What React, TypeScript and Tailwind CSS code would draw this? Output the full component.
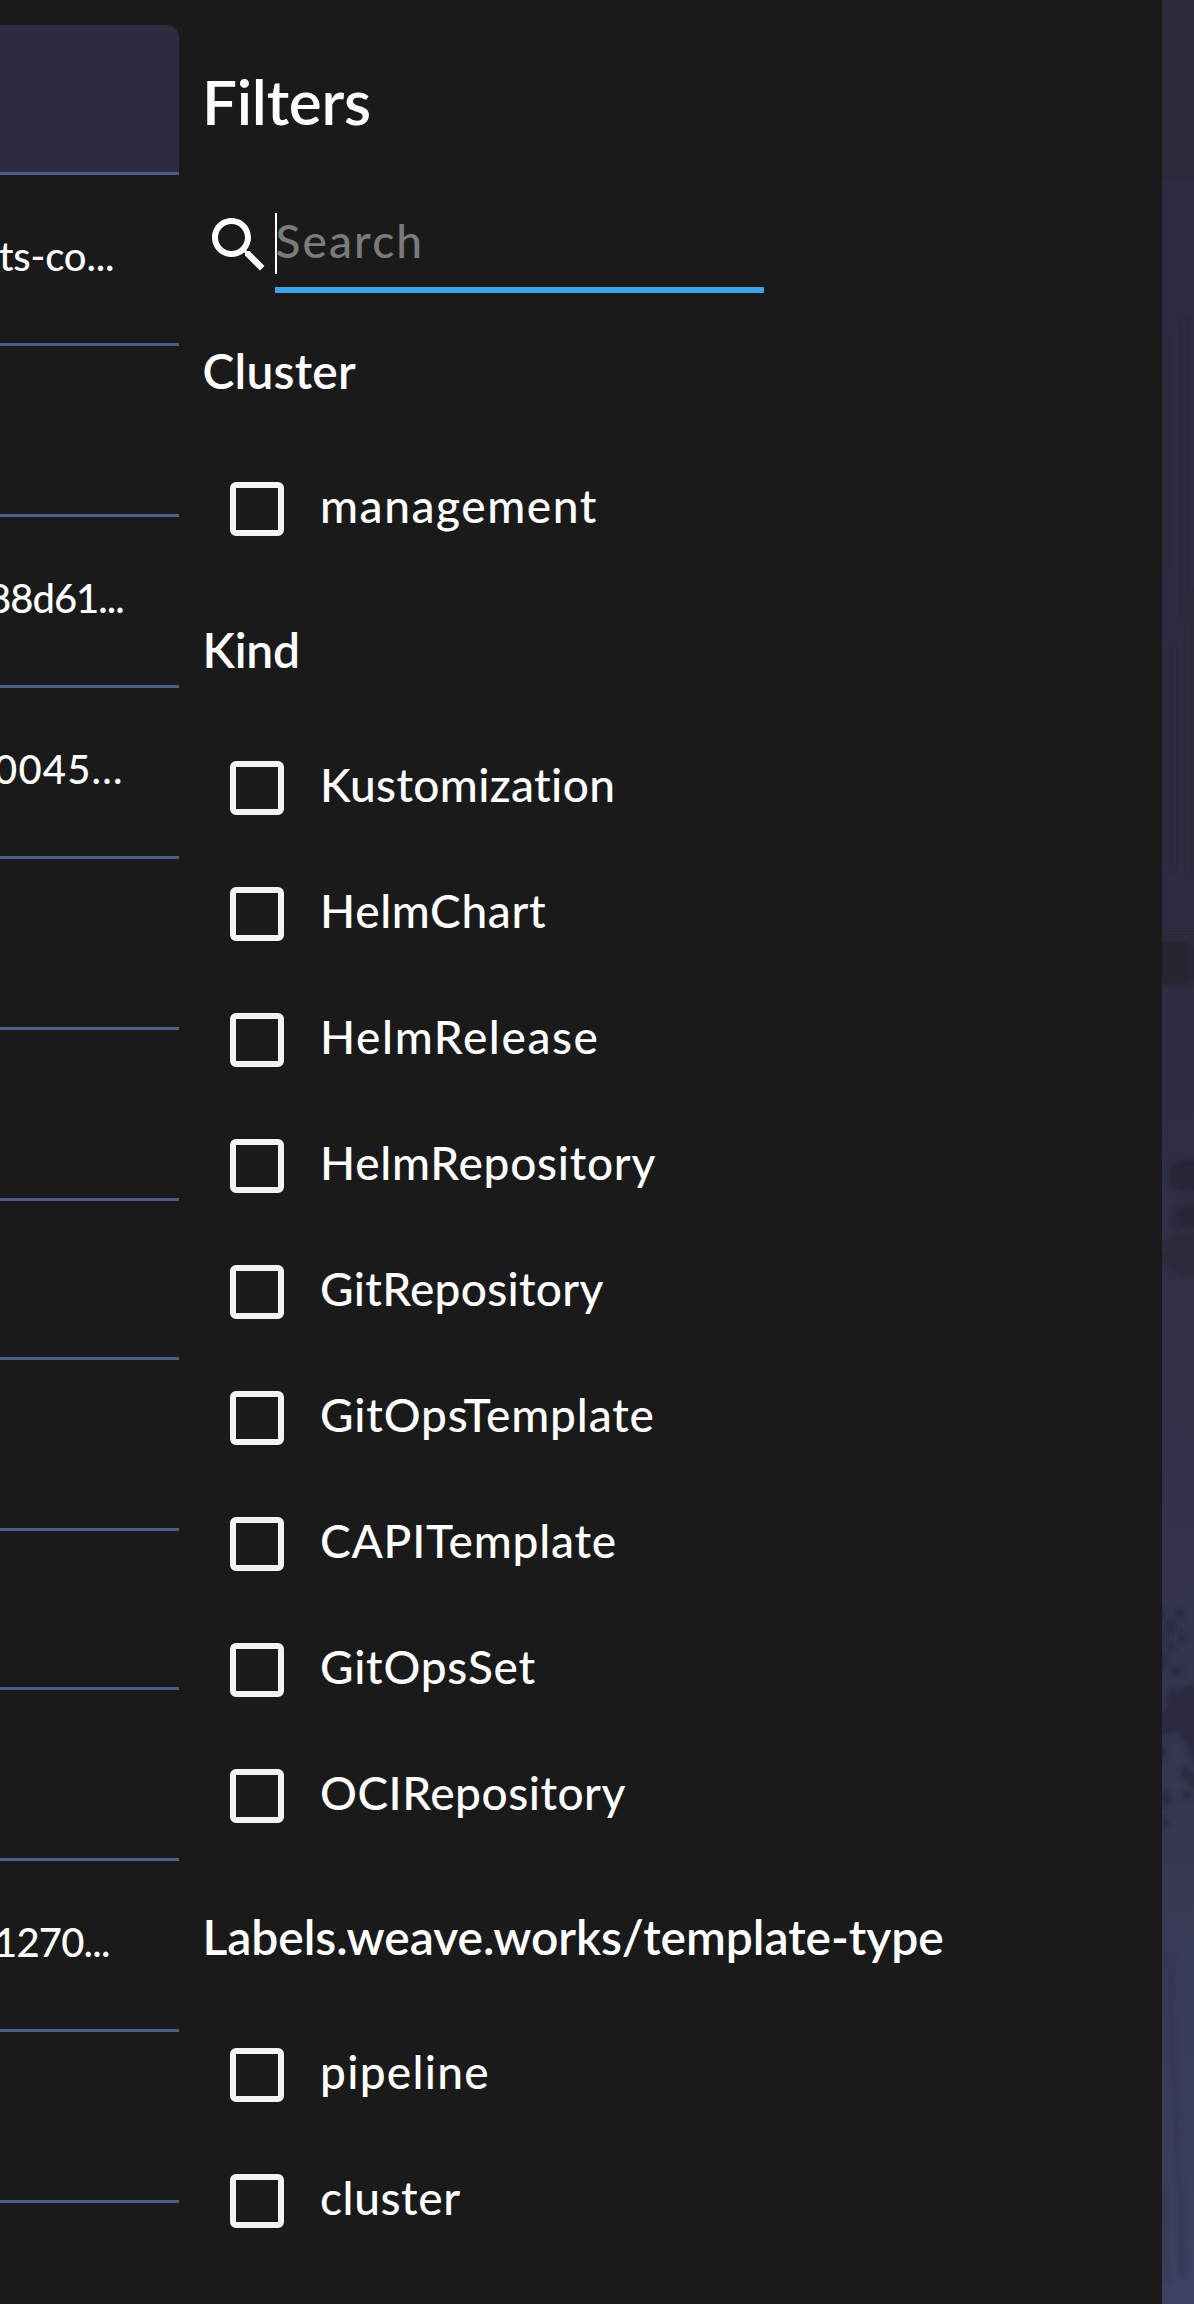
type Item = { text: string; tracking: string };

const tableRows: { height: string; text?: string; style?: string }[] = [
  { height: 'h-[171px]', text: 'ts-co...', style: '-ml-px tracking-[-0.17px]' },
  { height: 'h-[171px]' },
  { height: 'h-[171px]', text: '88d61...', style: '-ml-[12px] tracking-[-1px]' },
  { height: 'h-[171px]', text: '0045...', style: '-ml-[6px] tracking-[1.2px]' },
  { height: 'h-[171px]' },
  { height: 'h-[171px]' },
  { height: 'h-[159px]' },
  { height: 'h-[171px]' },
  { height: 'h-[159px]' },
  { height: 'h-[171px]' },
  { height: 'h-[171px]', text: '1270...', style: '-ml-[6px] tracking-[-0.8px]' },
  { height: 'h-[171px]' },
];

const sections: { title: string; tracking: string; items: Item[] }[] = [
  {
    title: 'Cluster',
    tracking: 'tracking-[0.2px]',
    items: [{ text: 'management', tracking: 'tracking-[1.58px]' }],
  },
  {
    title: 'Kind',
    tracking: 'tracking-[-0.2px]',
    items: [
      { text: 'Kustomization', tracking: 'tracking-[0.37px]' },
      { text: 'HelmChart', tracking: 'tracking-[0.67px]' },
      { text: 'HelmRelease', tracking: 'tracking-[1.6px]' },
      { text: 'HelmRepository', tracking: 'tracking-[0.72px]' },
      { text: 'GitRepository', tracking: 'tracking-[0.3px]' },
      { text: 'GitOpsTemplate', tracking: 'tracking-[0.84px]' },
      { text: 'CAPITemplate', tracking: 'tracking-[0.8px]' },
      { text: 'GitOpsSet', tracking: 'tracking-[0.74px]' },
      { text: 'OCIRepository', tracking: 'tracking-[0.52px]' },
    ],
  },
  {
    title: 'Labels.weave.works/template-type',
    tracking: 'tracking-[-0.05px]',
    items: [
      { text: 'pipeline', tracking: 'tracking-[1.3px]' },
      { text: 'cluster', tracking: 'tracking-[0.6px]' },
    ],
  },
];

function SourcesTable() {
  return (
    <div className="w-[179px] shrink-0 overflow-hidden pt-[25px]">
      <div className="h-[150px] rounded-tr-[12px] border-b-[3px] border-[#4e5d88] bg-[#2c2c40]" />
      {tableRows.map((row, i) => (
        <div key={i} className={`${row.height} border-b-[3px] border-[#4e5d88] pt-[60px]`}>
          {row.text && (
            <div className={`text-[40px] leading-[42px] font-medium whitespace-nowrap ${row.style}`}>
              {row.text}
            </div>
          )}
        </div>
      ))}
    </div>
  );
}

function SearchField() {
  return (
    <div className="mt-[77px] ml-px flex h-[84px] items-start">
      <svg viewBox="0 0 24 24" className="size-[72px] shrink-0" fill="currentColor">
        <path d="M15.5 14h-.79l-.28-.27C15.41 12.59 16 11.11 16 9.5 16 5.91 13.09 3 9.5 3S3 5.91 3 9.5 5.91 16 9.5 16c1.61 0 3.09-.59 4.23-1.57l.27.28v.79l5 4.99L20.49 19l-4.99-5zm-6 0C7.01 14 5 11.99 5 9.5S7.01 5 9.5 5 14 7.01 14 9.5 11.99 14 9.5 14z" />
      </svg>
      <div className="flex h-[84px] w-[489px] items-start border-b-[6px] border-[#3ba3e6] pt-1">
        <div className="h-[61px] w-[2px] shrink-0 bg-white" />
        <div className="-ml-[1.5px] text-[46px] leading-[56px] font-medium tracking-[2.1px] text-[#7b7b7b]">
          Search
        </div>
      </div>
    </div>
  );
}

function Backdrop() {
  return (
    <svg
      viewBox="0 0 32 2304"
      className="h-full w-8 shrink-0"
      preserveAspectRatio="none"
    >
      <defs>
        <linearGradient id="sky" x1="0" y1="0" x2="0" y2="1">
          <stop offset="0" stopColor="#2c2c40" />
          <stop offset="0.4" stopColor="#2d2d42" />
          <stop offset="0.54" stopColor="#2f2f45" />
          <stop offset="0.66" stopColor="#32324a" />
          <stop offset="0.74" stopColor="#34354f" />
          <stop offset="0.86" stopColor="#383b57" />
          <stop offset="1" stopColor="#3d4163" />
        </linearGradient>
        <filter id="soft" x="-50%" y="-10%" width="200%" height="120%">
          <feGaussianBlur stdDeviation="2" />
        </filter>
      </defs>
      <rect width="32" height="2304" fill="url(#sky)" />
      <rect width="32" height="180" fill="#2a2a3c" />
      <g filter="url(#soft)">
        <g fill="#29293b" opacity=".75">
          <rect x="6" y="645" width="6" height="225" />
          <rect x="26" y="590" width="5" height="285" />
          <rect x="21" y="320" width="3" height="300" opacity=".5" />
          <rect x="2" y="340" width="4" height="230" opacity=".5" />
        </g>
        <rect x="-5" y="932" width="42" height="20" fill="#29293a" />
        <rect x="-5" y="942" width="32" height="43" fill="#272632" />
        <rect x="26" y="945" width="12" height="39" fill="#292838" />
        <g fill="#272737">
          <rect x="7" y="1160" width="40" height="31" rx="15" />
          <rect x="11" y="1206" width="40" height="22" rx="11" />
          <rect x="2" y="1234" width="50" height="41" rx="20" fill="#292938" />
        </g>
        <g fill="#2a2c40">
          <ellipse cx="-1" cy="1614" rx="4" ry="6" />
          <ellipse cx="18" cy="1614" rx="4" ry="5" />
          <ellipse cx="9" cy="1627" rx="6" ry="7" />
          <ellipse cx="20" cy="1638" rx="4" ry="5" />
          <ellipse cx="9" cy="1646" rx="4" ry="4" />
          <ellipse cx="0" cy="1638" rx="3" ry="6" />
          <ellipse cx="1" cy="1661" rx="4" ry="8" />
          <ellipse cx="14" cy="1672" rx="7" ry="5" />
          <path d="M34 1684 L22 1686 L17 1693 L10 1687 L4 1698 L5 1708 L-4 1714 L-4 1733 L9 1735 L18 1728 L18 1738 L25 1745 L29 1760 L34 1765 Z" />
          <ellipse cx="0" cy="1752" rx="4" ry="8" />
          <ellipse cx="24" cy="1773" rx="5" ry="6" />
          <ellipse cx="31" cy="1780" rx="4" ry="9" />
          <ellipse cx="25" cy="1795" rx="5" ry="4" />
          <ellipse cx="4" cy="1799" rx="5" ry="7" />
          <ellipse cx="4" cy="1823" rx="3" ry="5" />
        </g>
        <path
          d="M9 1955 L10 2060 L14 2100 L15 2160 L19 2200 L20 2275"
          fill="none"
          stroke="#343650"
          strokeWidth="4"
        />
        <path d="M1 2185 L1 2240 L5 2280" fill="none" stroke="#363954" strokeWidth="4" />
      </g>
      <rect y="1068" width="32" height="9" fill="#312d42" />
    </svg>
  );
}

export default function App() {
  return (
    <div className="flex h-[2304px] w-[1194px] overflow-hidden bg-[#1a1a1a] font-['Lato',sans-serif] text-white">
      <SourcesTable />
      <aside className="min-w-0 flex-1 pt-[70px] pl-[23px]">
        <h1 className="text-[62px] leading-[62px] font-semibold tracking-[-0.24px]">Filters</h1>
        <SearchField />
        <div className="pt-9">
          {sections.map((section) => (
            <section key={section.title} className="pt-[18px]">
              <h2
                className={`mb-[87px] ml-[0.5px] text-[48px] leading-[48px] font-semibold whitespace-nowrap ${section.tracking}`}
              >
                {section.title}
              </h2>
              <ul className="pl-7">
                {section.items.map((item) => (
                  <li key={item.text} className="flex h-[126px] items-start gap-9">
                    <span
                      role="checkbox"
                      aria-checked="false"
                      className="size-[54px] shrink-0 rounded-[6px] border-[6px] border-[#f3f3f4]"
                    />
                    <span
                      className={`text-[46px] leading-[48px] font-medium whitespace-nowrap ${item.tracking}`}
                    >
                      {item.text}
                    </span>
                  </li>
                ))}
              </ul>
            </section>
          ))}
        </div>
      </aside>
      <Backdrop />
    </div>
  );
}
